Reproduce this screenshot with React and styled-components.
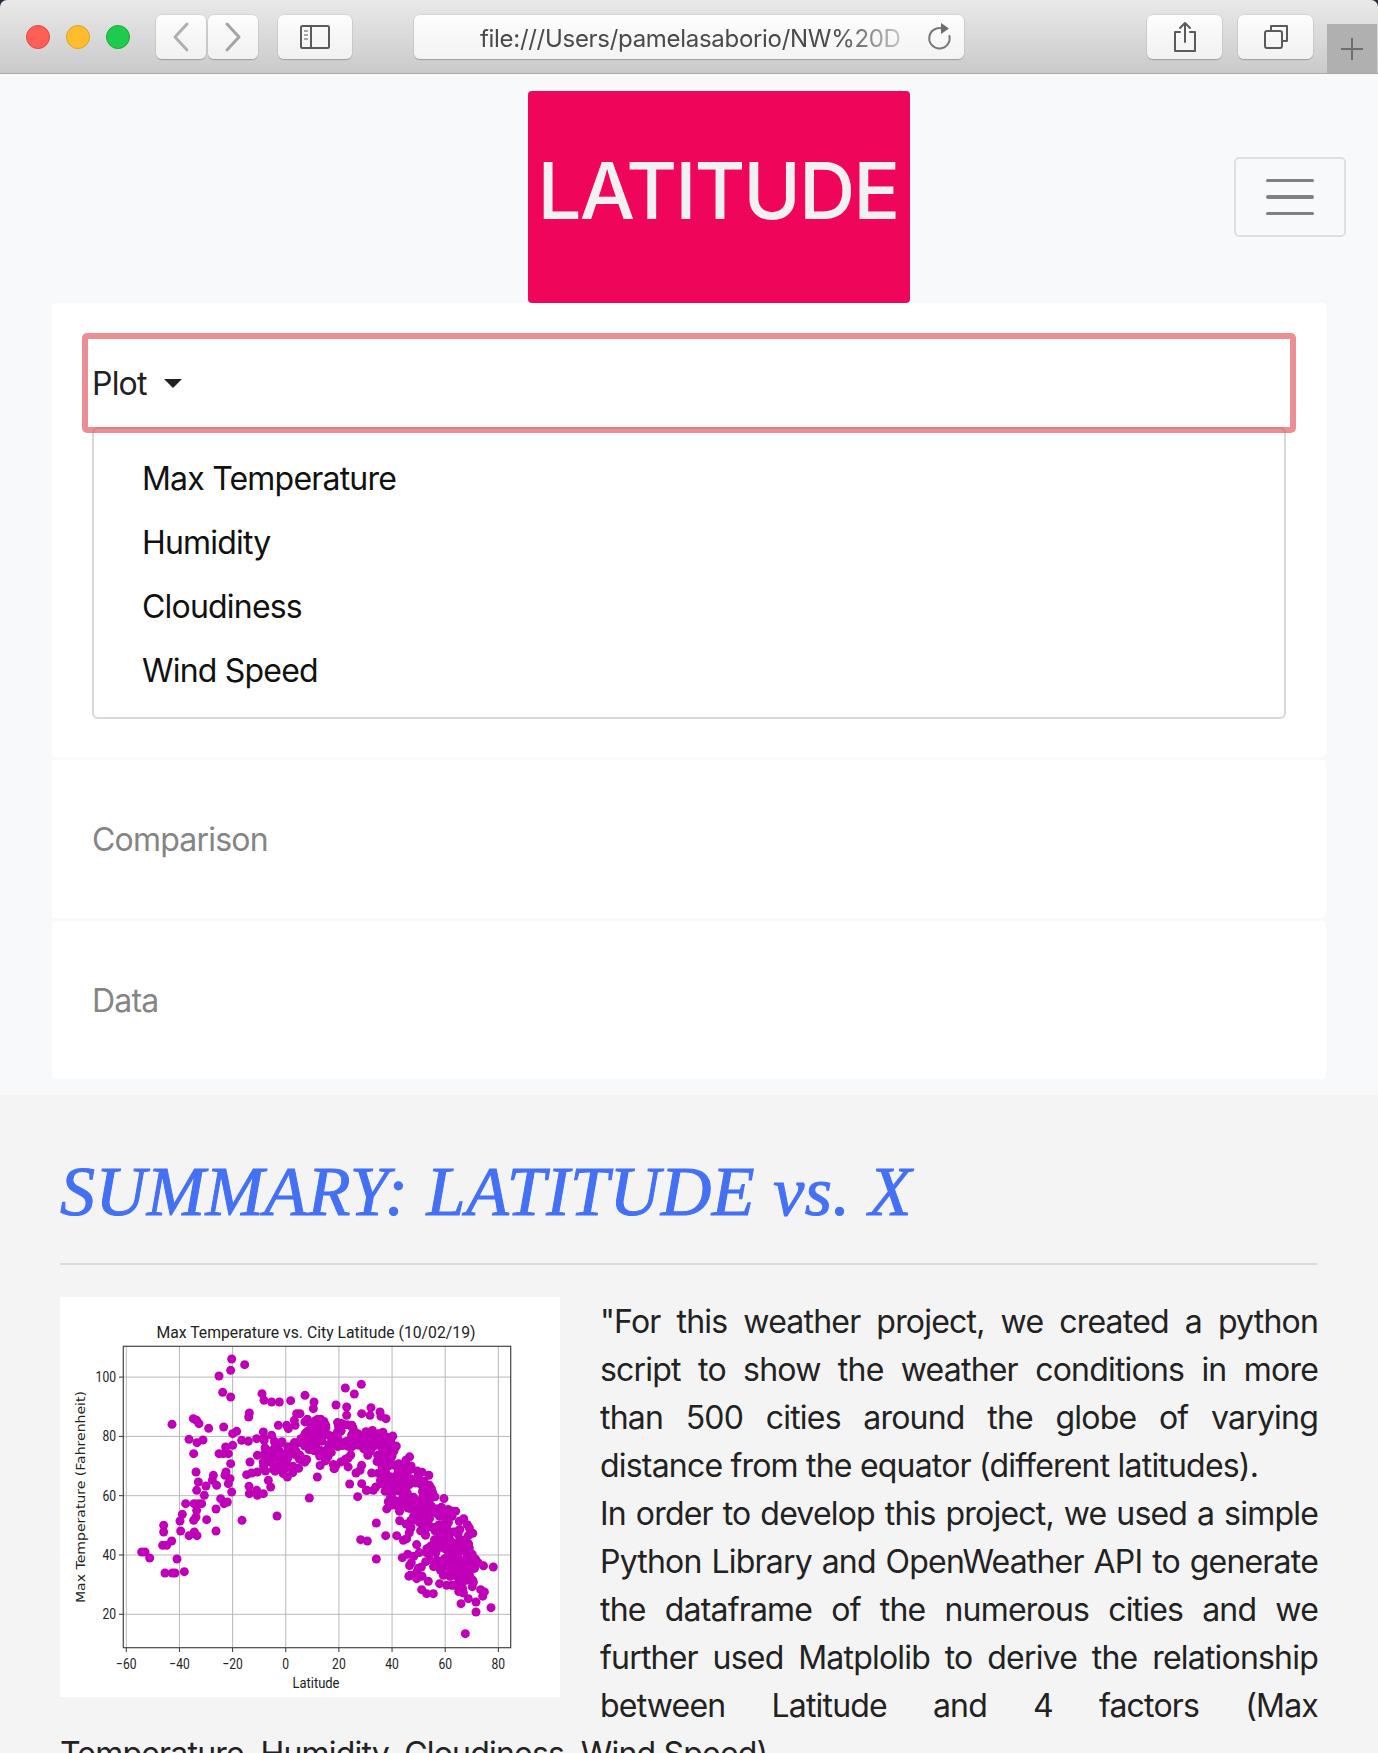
import React from "react";
import styled, { createGlobalStyle } from "styled-components";

const GlobalStyle = createGlobalStyle`
  html, body {
    margin: 0;
    height: 1753px;
    overflow: hidden;
    background: #f4f4f4;
  }
  body {
    font-family: Inter, "Liberation Sans", sans-serif;
    font-size: 32px;
    letter-spacing: -0.8px;
    color: #212529;
  }
`;

// scatter points, read off the picture in 3x chart coordinates
const POINTS = [
  [275,785],[285,785],[299,803],[345,848],[367,848],[375,848],[403,844],[381,806],[338,765],[350,765],[365,752],[341,705],[341,725],
  [392,722],[390,692],[397,672],[417,736],[441,736],[433,725],[407,640],[431,690],[438,680],[470,688],[498,722],[498,656],[432,640],
  [445,640],[455,640],[440,660],[463,615],[440,600],[445,575],[438,545],[468,587],[431,490],[417,447],[441,457],[459,449],[476,414],
  [447,400],[440,390],[430,385],[366,402],[507,257],[545,206],[584,223],[542,240],[518,306],[542,320],[521,410],[507,490],[520,490],
  [527,470],[535,490],[542,520],[528,545],[525,555],[540,565],[535,580],[545,605],[512,625],[522,640],[532,635],[490,555],[487,570],
  [500,585],[576,690],[681,677],[778,623],[596,380],[598,368],[636,310],[642,330],[665,335],[688,335],[722,331],[765,315],[792,335],
  [790,355],[858,344],[886,293],[913,311],[934,282],[890,350],[890,375],[963,352],[960,375],[935,370],[990,365],[993,378],[1008,385],
  [548,430],[560,423],[548,465],[575,450],[595,453],[620,445],[640,425],[665,435],[600,515],[590,553],[605,548],[622,545],[597,588],
  [598,610],[620,600],[622,615],[640,610],[655,570],[662,590],[622,495],[640,515],[655,500],[665,490],[680,470],[690,460],[712,485],
  [685,405],[710,405],[715,415],[733,390],[740,370],[750,370],[700,550],[712,560],[690,515],[705,525],[802,560],[853,535],[899,581],
  [923,619],[932,748],[952,752],[979,806],[979,698],[1007,736],[965,548],[918,548],[930,540],[935,525],[935,580],[950,600],[970,600],
  [1040,736],[1060,750],[1070,745],[1057,802],[1080,855],[1100,865],[1135,873],[1115,898],[1130,910],[1150,910],[1180,855],[1190,885],
  [1205,885],[1233,940],[1255,925],[1246,1030],[1278,965],[1278,935],[1292,898],[1323,952],[1330,830],[1285,818],[1255,736],
];

let seed = 42;
const rand = () => {
  seed = (seed * 16807) % 2147483647;
  return seed / 2147483647;
};

const blob = [];
for (let i = 0; i < 120; i++) blob.push([730 + rand() * 180, 385 + rand() * 150]);
for (let i = 0; i < 40; i++) blob.push([640 + rand() * 90, 440 + rand() * 110]);
for (let i = 0; i < 40; i++) blob.push([900 + rand() * 130, 420 + rand() * 60]);
for (let i = 0; i < 300; i++) {
  const t = rand();
  blob.push([985 + t * 285 + (rand() - 0.5) * 90, 510 + t * 330 + (rand() - 0.5) * 170]);
}
for (let i = 0; i < 45; i++) blob.push([1070 + rand() * 200, 770 + rand() * 110]);

const px = x => (x - 30) / 3;
const py = y => (y - 20) / 3;
const lon = v => 66.3 + ((v + 60) / 20) * 53.15;
const lat = v => 317.3 - ((v - 20) / 20) * 59.3;

const Chart = () => (
  <ChartSvg viewBox="0 0 500 400">
    <rect width="500" height="400" fill="#fff" />
    {[-60, -40, -20, 0, 20, 40, 60, 80].map(v => (
      <g key={v}>
        <line x1={lon(v)} x2={lon(v)} y1="49" y2="351" stroke="#b8b8b8" strokeWidth="1" />
        <line x1={lon(v)} x2={lon(v)} y1="351" y2="355" stroke="#333" strokeWidth="1" />
        <ChartLabel x={lon(v)} y="372" textAnchor="middle" textLength={String(v).length * 6.8} lengthAdjust="spacingAndGlyphs">
          {v < 0 ? `\u2212${-v}` : v}
        </ChartLabel>
      </g>
    ))}
    {[20, 40, 60, 80, 100].map(v => (
      <g key={v}>
        <line x1="63" x2="451" y1={lat(v)} y2={lat(v)} stroke="#b8b8b8" strokeWidth="1" />
        <line x1="59" x2="63" y1={lat(v)} y2={lat(v)} stroke="#333" strokeWidth="1" />
        <ChartLabel x="56" y={lat(v) + 5} textAnchor="end" textLength={String(v).length * 6.8} lengthAdjust="spacingAndGlyphs">
          {v}
        </ChartLabel>
      </g>
    ))}
    {POINTS.concat(blob).map(([x, y], i) => (
      <circle key={i} cx={px(x)} cy={py(y)} r="4.5" fill="#bf00b8" />
    ))}
    <rect x="63.3" y="49.3" width="387.4" height="301.4" fill="none" stroke="#444" strokeWidth="1.2" />
    <ChartLabel x="256" y="41" size="16.5" textAnchor="middle" textLength="319" lengthAdjust="spacingAndGlyphs">
      Max Temperature vs. City Latitude (10/02/19)
    </ChartLabel>
    <ChartLabel x="256" y="391" textAnchor="middle" textLength="47" lengthAdjust="spacingAndGlyphs">
      Latitude
    </ChartLabel>
    <AxisLabel transform="translate(25 200) rotate(-90)" textAnchor="middle" textLength="212" lengthAdjust="spacingAndGlyphs">
      Max Temperature (Fahrenheit)
    </AxisLabel>
  </ChartSvg>
);

export default function App() {
  return (
    <Page>
      <GlobalStyle />
      <Chrome>
        <Toolbar>
          <Lights>
            <Light color="#ff5f57" edge="#e0443e" />
            <Light color="#ffbd2e" edge="#dea123" />
            <Light color="#1fcb4f" edge="#1aab29" />
          </Lights>
          <NavGroup>
            <ToolButton width="50px">
              <svg width="20" height="32" viewBox="0 0 20 32" fill="none" stroke="#b0b0b0" strokeWidth="3" strokeLinecap="round" strokeLinejoin="round">
                <path d="M16 3 L4 16 L16 29" />
              </svg>
            </ToolButton>
            <ToolButton width="50px">
              <svg width="20" height="32" viewBox="0 0 20 32" fill="none" stroke="#a4a4a4" strokeWidth="3" strokeLinecap="round" strokeLinejoin="round">
                <path d="M4 3 L16 16 L4 29" />
              </svg>
            </ToolButton>
          </NavGroup>
          <ToolButton width="74px" gap="20px">
            <svg width="30" height="24" viewBox="0 0 30 24" fill="none" stroke="#5a5a5a" strokeWidth="2">
              <rect x="1" y="1" width="28" height="22" rx="1.5" />
              <path d="M11 1 V23" />
              <path d="M4 6 H8 M4 10 H8 M4 14 H8" strokeWidth="1.6" stroke="#8a8a8a" />
            </svg>
          </ToolButton>
          <UrlBar>
            <UrlText>file:///Users/pamelasaborio/NW%20D</UrlText>
            <svg width="26" height="28" viewBox="0 0 26 28" fill="none">
              <path d="M16 5.4 A10.2 10.2 0 1 0 23.4 13" stroke="#777" strokeWidth="2" strokeLinecap="round" />
              <path d="M15 0 L23 5.5 L15 11 Z" fill="#6c6c6c" />
            </svg>
          </UrlBar>
          <ToolButton width="75px" margin="183px">
            <svg width="24" height="32" viewBox="0 0 24 32" fill="none" stroke="#5a5a5a" strokeWidth="2" strokeLinejoin="round" strokeLinecap="round">
              <path d="M7 11 H2 V30 H22 V11 H17" />
              <path d="M12 21 V2 M7 7 L12 2 L17 7" />
            </svg>
          </ToolButton>
          <ToolButton width="75px" gap="16px">
            <svg width="26" height="26" viewBox="0 0 26 26" fill="none" stroke="#5a5a5a" strokeWidth="2" strokeLinejoin="round">
              <path d="M8 6 V2 H24 V17 H20" />
              <rect x="2" y="7" width="17" height="17" rx="2" />
            </svg>
          </ToolButton>
          <NewTab>
            <svg width="24" height="24" viewBox="0 0 24 24" stroke="#6e6e6e" strokeWidth="2">
              <path d="M12 1 V23 M1 12 H23" />
            </svg>
          </NewTab>
        </Toolbar>
      </Chrome>

      <Header>
        <Brand>LATITUDE</Brand>
        <Toggler>
          <TogglerBar />
          <TogglerBar />
          <TogglerBar />
        </Toggler>
      </Header>

      <Cards>
        <OpenCard>
          <FocusedLink>
            Plot
            <Caret />
          </FocusedLink>
          <Menu>
            <MenuItem>Max Temperature</MenuItem>
            <MenuItem>Humidity</MenuItem>
            <MenuItem>Cloudiness</MenuItem>
            <MenuItem>Wind Speed</MenuItem>
          </Menu>
        </OpenCard>
        <ClosedCard>Comparison</ClosedCard>
        <ClosedCard>Data</ClosedCard>
      </Cards>

      <Summary>
        <Heading>SUMMARY: LATITUDE vs. X</Heading>
        <Divider />
        <Body>
          <Chart />
          "For this weather project, we created a python script to show the weather conditions in more than 500 cities around the globe of varying distance from the equator (different latitudes).
          <br />
          In order to develop this project, we used a simple Python Library and OpenWeather API to generate the dataframe of the numerous cities and we further used Matplolib to derive the relationship between Latitude and 4 factors (Max Temperature, Humidity, Cloudiness, Wind Speed).
        </Body>
      </Summary>
    </Page>
  );
}

const Page = styled.div`
  background: #f8f9fa;
`;

const Chrome = styled.div`
  background: #20303f;
`;

const Toolbar = styled.div`
  display: flex;
  align-items: flex-start;
  box-sizing: border-box;
  height: 74px;
  padding: 15px 0 0 26px;
  background: linear-gradient(#e9e9e9, #cacaca);
  border-bottom: 1px solid #a9a9a9;
  border-radius: 7px 7px 0 0;
`;

const Lights = styled.div`
  display: flex;
  gap: 16px;
  margin-top: 10px;
`;

const Light = styled.span`
  width: 24px;
  height: 24px;
  box-sizing: border-box;
  border-radius: 50%;
  background: ${props => props.color};
  border: 1px solid ${props => props.edge};
`;

const NavGroup = styled.div`
  display: flex;
  gap: 2px;
  margin-left: 26px;
`;

const ToolButton = styled.div`
  display: flex;
  align-items: center;
  justify-content: center;
  flex: none;
  box-sizing: border-box;
  width: ${props => props.width};
  height: 44px;
  margin-left: ${props => props.margin || props.gap || 0};
  background: linear-gradient(#fdfdfd, #f1f1f1);
  border-radius: 6px;
  box-shadow: 0 1px 1px #9c9c9c, 0 0 0 0.5px #c8c8c8;
`;

const UrlBar = styled.div`
  display: flex;
  align-items: center;
  flex: none;
  box-sizing: border-box;
  width: 550px;
  height: 44px;
  margin-left: 62px;
  padding: 0 12px 0 66px;
  background: linear-gradient(#fdfdfd, #f3f3f3);
  border-radius: 6px;
  box-shadow: 0 1px 1px #9c9c9c, 0 0 0 0.5px #c8c8c8;
`;

const UrlText = styled.div`
  flex: 1;
  overflow: hidden;
  white-space: nowrap;
  padding-top: 2px;
  font-family: Inter, sans-serif;
  font-size: 24px;
  letter-spacing: -0.3px;
  color: #4a4a4a;
  -webkit-mask-image: linear-gradient(to right, #000 80%, transparent 100%);
  mask-image: linear-gradient(to right, #000 80%, transparent 100%);
`;

const NewTab = styled.div`
  display: flex;
  align-items: center;
  justify-content: center;
  flex: none;
  width: 50px;
  height: 49px;
  margin: 9px 0 0 14px;
  background: #b0b0b0;
`;

const Header = styled.header`
  display: flex;
  align-items: center;
  padding: 17px 32px 0 528px;
`;

const Brand = styled.div`
  display: flex;
  align-items: center;
  justify-content: center;
  box-sizing: border-box;
  width: 382px;
  height: 212px;
  padding: 0 2px 14px 0;
  background: #ef0559;
  border-radius: 4px;
  color: #f1f1f1;
  font-size: 78px;
  font-weight: 500;
  letter-spacing: -2px;
`;

const Toggler = styled.div`
  display: flex;
  flex-direction: column;
  align-items: center;
  justify-content: center;
  gap: 13px;
  box-sizing: border-box;
  width: 112px;
  height: 80px;
  margin-left: auto;
  border: 2px solid #dfe0e1;
  border-radius: 5px;
`;

const TogglerBar = styled.span`
  width: 48px;
  height: 3.5px;
  border-radius: 2px;
  background: #808080;
`;

const Cards = styled.main`
  display: flex;
  flex-direction: column;
  gap: 3px;
  margin: 0 52px;
  padding-bottom: 16px;
`;

const OpenCard = styled.section`
  height: 454px;
  box-sizing: border-box;
  padding: 30px 30px 0 30px;
  background: #fff;
  border-radius: 4px;
`;

const FocusedLink = styled.div`
  position: relative;
  z-index: 1;
  display: flex;
  align-items: center;
  box-sizing: border-box;
  height: 100px;
  padding: 1px 0 0 4px;
  border: 6px solid rgba(222, 62, 71, 0.58);
  border-radius: 5px;
  color: #212121;
`;

const Caret = styled.span`
  width: 0;
  height: 0;
  margin: 0 0 0 17px;
  border-top: 9px solid #212121;
  border-left: 9px solid transparent;
  border-right: 9px solid transparent;
`;

const Menu = styled.div`
  box-sizing: border-box;
  height: 292px;
  margin: -6px 10px 0;
  padding: 18px 48px 0;
  background: #fff;
  border: 2px solid #d8d8d8;
  border-radius: 6px;
`;

const MenuItem = styled.div`
  height: 64px;
  line-height: 64px;
  color: #111;
`;

const ClosedCard = styled.section`
  display: flex;
  align-items: center;
  box-sizing: border-box;
  height: 158px;
  padding-left: 40px;
  background: #fff;
  color: #858585;
  border-radius: 4px;
`;

const Summary = styled.section`
  background: #f4f4f4;
  padding: 0 60px;
  height: 658px;
`;

const Heading = styled.h1`
  margin: 0;
  height: 168px;
  padding-top: 53px;
  box-sizing: border-box;
  font-family: "Liberation Serif", serif;
  font-style: italic;
  font-weight: 400;
  font-size: 70px;
  line-height: 88px;
  letter-spacing: 0.55px;
  color: #4470f4;
  -webkit-text-stroke: 1px #4470f4;
  white-space: nowrap;
`;

const Divider = styled.hr`
  margin: 0 0 33px;
  border: 0;
  border-top: 2px solid #dcdcdc;
`;

const ChartSvg = styled.svg`
  float: left;
  display: block;
  width: 500px;
  height: 400px;
  margin: -1px 40px 0 0;
`;

const ChartLabel = styled.text`
  font-family: Roboto, sans-serif;
  font-size: ${props => props.size || 15}px;
  letter-spacing: 0;
  fill: #222;
`;

const AxisLabel = styled.text`
  font-family: "DejaVu Sans", sans-serif;
  font-size: 12.5px;
  letter-spacing: 0;
  fill: #222;
`;

const Body = styled.div`
  font-size: 32px;
  line-height: 48px;
  text-align: justify;
  color: #222;
`;
